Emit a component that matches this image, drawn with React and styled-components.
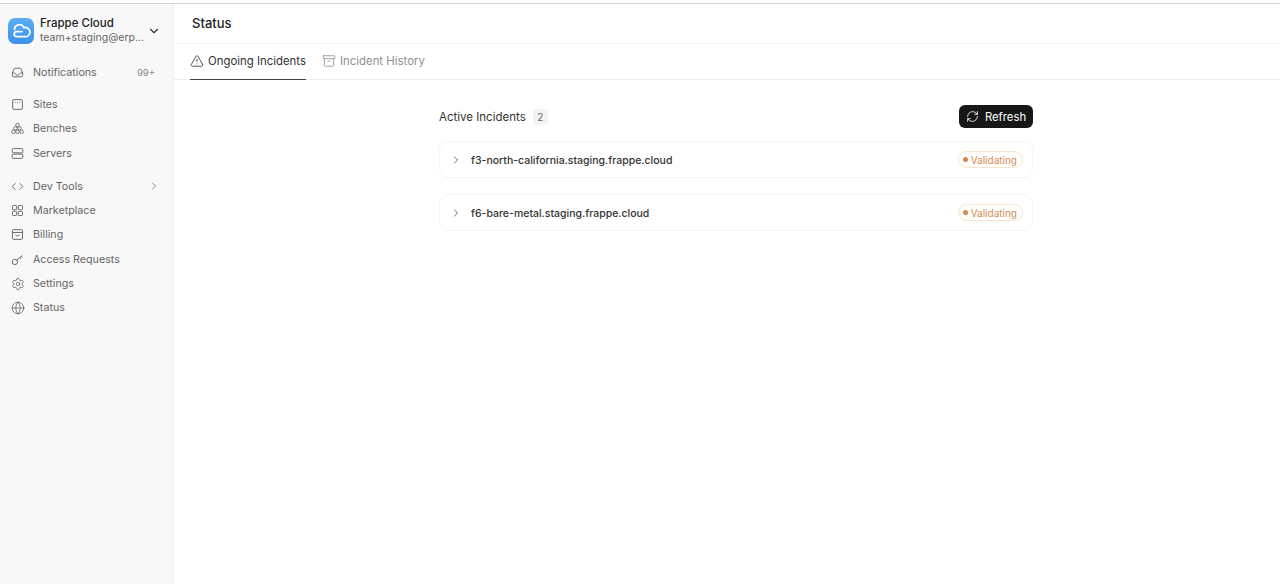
import React from "react";
import styled, { createGlobalStyle } from "styled-components";
import { AlertTriangle, Archive, ChevronDown, ChevronRight, Globe, RefreshCw, Settings } from "lucide-react";

const GlobalStyle = createGlobalStyle`
  html, body {
    margin: 0;
    padding: 0;
    background: #fff;
    font-family: Inter, "Liberation Sans", sans-serif;
  }
`;

const InboxIcon = (props) => (
  <svg viewBox="0 0 16 16" fill="none" stroke="currentColor" strokeWidth="1.1" {...props}>
    <path d="M1.700 8.500 3.800 3.500c.2-.5.6-.8 1.200-.8h6c.6 0 1 .3 1.200.8l2.100 5v3.300c0 .9-.6 1.500-1.500 1.500H3.200c-.9 0-1.500-.6-1.500-1.500z" />
    <path d="M1.700 8.300c2 0 3.300.4 3.800 1.500.5 1 1.300 1.400 2.500 1.400s2-.4 2.500-1.400c.5-1.100 1.800-1.500 3.800-1.500" />
  </svg>
);

const SiteIcon = (props) => (
  <svg viewBox="0 0 16 16" fill="none" stroke="currentColor" strokeWidth="1.100" {...props}>
    <rect x="2" y="2" width="12" height="12" rx="1.500" />
    <path d="M4.500 5.300h1M7.500 5.300h1M10.500 5.300h1" />
  </svg>
);

const BenchIcon = (props) => (
  <svg viewBox="0 0 16 16" fill="none" stroke="currentColor" strokeWidth="1" {...props}>
    <circle cx="8" cy="3.800" r="2.200" />
    <circle cx="5.500" cy="7.800" r="2.200" />
    <circle cx="10.500" cy="7.800" r="2.200" />
    <circle cx="3" cy="12" r="2.200" />
    <circle cx="8" cy="12" r="2.200" />
    <circle cx="13" cy="12" r="2.200" />
  </svg>
);

const ServerIcon = (props) => (
  <svg viewBox="0 0 16 16" fill="none" stroke="currentColor" strokeWidth="1.100" {...props}>
    <rect x="1.500" y="2" width="13" height="5.200" rx="1.200" />
    <rect x="1.500" y="8.800" width="13" height="5.200" rx="1.200" />
  </svg>
);

const CodeIcon = (props) => (
  <svg viewBox="0 0 16 16" fill="none" stroke="currentColor" strokeWidth="1.100" {...props}>
    <path d="M5.500 4 1.500 8l4 4M10.500 4l4 4-4 4" />
  </svg>
);

const GridIcon = (props) => (
  <svg viewBox="0 0 16 16" fill="none" stroke="currentColor" strokeWidth="1.100" {...props}>
    <rect x="1.800" y="1.800" width="5.200" height="5.200" rx="1" />
    <rect x="9" y="1.800" width="5.200" height="5.200" rx="1" />
    <rect x="1.800" y="9" width="5.200" height="5.200" rx="1" />
    <rect x="9" y="9" width="5.200" height="5.200" rx="1" />
  </svg>
);

const BillingIcon = (props) => (
  <svg viewBox="0 0 16 16" fill="none" stroke="currentColor" strokeWidth="1.100" {...props}>
    <rect x="1.800" y="2" width="12.400" height="12" rx="1.500" />
    <path d="M1.800 5.500h12.400M5.500 8c.4 1.100 1.300 1.700 2.500 1.700s2.100-.6 2.500-1.700" />
  </svg>
);

const KeyIcon = (props) => (
  <svg viewBox="0 0 16 16" fill="none" stroke="currentColor" strokeWidth="1.100" {...props}>
    <circle cx="4.800" cy="11" r="3.300" />
    <path d="M7.200 8.700 13.800 3M10.800 5.600l1.400 1.700M12.700 4l1.300 1.500" />
  </svg>
);

const CloudLogo = () => (
  <svg width="20" height="14" viewBox="0 0 18 13" fill="none" stroke="#fff" strokeWidth="1.600" strokeLinecap="round">
    <path d="M3 5A4.500 4.500 0 0 1 11.600 3.300 4 4 0 0 1 14 11.800H5A2.400 2.400 0 0 1 5 7H10" />
  </svg>
);

const primaryNav = [
  { label: "Sites", Icon: SiteIcon },
  { label: "Benches", Icon: BenchIcon },
  { label: "Servers", Icon: ServerIcon },
];
const secondaryNav = [
  { label: "Dev Tools", Icon: CodeIcon, more: true },
  { label: "Marketplace", Icon: GridIcon },
  { label: "Billing", Icon: BillingIcon },
  { label: "Access Requests", Icon: KeyIcon },
  { label: "Settings", Icon: Settings, big: true },
  { label: "Status", Icon: Globe, big: true },
];

const incidents = ["f3-north-california.staging.frappe.cloud", "f6-bare-metal.staging.frappe.cloud"];

const App = () => {
  return (
    <Page>
      <GlobalStyle />
      <TopRule />
      <Columns>
        <Sidebar>
          <Account>
            <Logo>
              <CloudLogo />
            </Logo>
            <AccountText>
              <AccountName>Frappe Cloud</AccountName>
              <AccountMail>team+staging@erp...</AccountMail>
            </AccountText>
            <ChevronDown size={14} color="#333" strokeWidth={2} />
          </Account>
          <NavGroup>
            <NavRow>
              <InboxIcon width={13} height={13} />
              <NavLabel>Notifications</NavLabel>
              <Count>99+</Count>
            </NavRow>
          </NavGroup>
          <NavGroup>
            {primaryNav.map(({ label, Icon }) => (
              <NavRow key={label}>
                <Icon width={13} height={13} />
                <NavLabel>{label}</NavLabel>
              </NavRow>
            ))}
          </NavGroup>
          <NavGroup>
            {secondaryNav.map(({ label, Icon, more, big }) => (
              <NavRow key={label}>
                {big ? <Icon size={14} strokeWidth={1.300} /> : <Icon width={13} height={13} />}
                <NavLabel $wide={big}>{label}</NavLabel>
                {more && <MoreArrow size={12} color="#8a8a8a" />}
              </NavRow>
            ))}
          </NavGroup>
        </Sidebar>
        <Main>
          <Header>Status</Header>
          <Tabs>
            <Tab $active>
              <AlertTriangle size={14} strokeWidth={1.400} />
              Ongoing Incidents
            </Tab>
            <Tab>
              <Archive size={14} strokeWidth={1.400} />
              Incident History
            </Tab>
          </Tabs>
          <Content>
            <IncidentPanel>
              <PanelHead>
                <PanelTitle>
                  Active Incidents <Badge>2</Badge>
                </PanelTitle>
                <RefreshButton>
                  <RefreshCw size={13} strokeWidth={1.500} />
                  Refresh
                </RefreshButton>
              </PanelHead>
              {incidents.map((name) => (
                <IncidentCard key={name}>
                  <ChevronRight size={12} color="#444" strokeWidth={1.600} />
                  <IncidentName>{name}</IncidentName>
                  <StatusPill>
                    <Dot />
                    Validating
                  </StatusPill>
                </IncidentCard>
              ))}
            </IncidentPanel>
          </Content>
        </Main>
      </Columns>
    </Page>
  );
};

const Page = styled.div`
  width: 1280px;
  height: 584px;
  overflow: hidden;
  display: flex;
  flex-direction: column;
  background: #fff;
`;

const TopRule = styled.div`
  height: 1px;
  margin-top: 3px;
  background: #d4d4d4;
  flex: none;
`;

const Columns = styled.div`
  flex: 1;
  display: flex;
  min-height: 0;
`;

const Sidebar = styled.aside`
  width: 174px;
  flex: none;
  box-sizing: border-box;
  padding: 12px 8px 0;
  background: #f8f8f8;
  border-right: 1px solid #efefef;
`;

const Account = styled.div`
  display: flex;
  align-items: center;
  gap: 6px;
  height: 29px;
  padding-right: 4px;
  margin-bottom: 15px;
`;

const Logo = styled.div`
  width: 26px;
  height: 26px;
  flex: none;
  border-radius: 7px;
  background: linear-gradient(180deg, #5aaef5, #3a90ec);
  display: flex;
  align-items: center;
  justify-content: center;
`;

const AccountText = styled.div`
  flex: 1;
  min-width: 0;
`;

const AccountName = styled.div`
  font-size: 11.500px;
  line-height: 15px;
  font-weight: 500;
  color: #222;
`;

const AccountMail = styled.div`
  font-size: 10.500px;
  line-height: 14px;
  color: #666;
  white-space: nowrap;
`;

const NavGroup = styled.div`
  margin-bottom: 8px;
  &:nth-of-type(3) {
    margin-bottom: 9px;
  }
`;

const NavRow = styled.div`
  display: flex;
  align-items: center;
  height: 24.300px;
  padding: 0 10px 0 2.500px;
  color: #5c5c5c;

  svg {
    flex: none;
  }
`;

const NavLabel = styled.span`
  flex: 1;
  margin-left: ${(p) => (p.$wide ? "8.500px" : "9.500px")};
  font-size: 10.700px;
  color: #666;
`;

const Count = styled.span`
  font-size: 9.500px;
  color: #8a8a8a;
`;

const MoreArrow = styled(ChevronRight)`
  margin-right: -5px;
`;

const Main = styled.main`
  flex: 1;
  min-width: 0;
`;

const Header = styled.div`
  height: 40px;
  box-sizing: border-box;
  padding: 0 0 2px 18px;
  display: flex;
  align-items: center;
  font-size: 13px;
  font-weight: 500;
  color: #222;
  border-bottom: 1px solid #f3f3f3;
`;

const Tabs = styled.div`
  height: 36px;
  box-sizing: border-box;
  padding-left: 16px;
  display: flex;
  gap: 16px;
  border-bottom: 1px solid #ededed;
`;

const Tab = styled.div`
  height: 36px;
  box-sizing: border-box;
  padding-bottom: 2px;
  display: flex;
  align-items: center;
  gap: 4px;
  font-size: 11.400px;
  color: ${(p) => (p.$active ? "#333" : "#8f8f8f")};
  border-bottom: ${(p) => (p.$active ? "1px solid #444" : "none")};
`;

const Content = styled.div`
  padding: 25px 0 0 265px;
`;

const IncidentPanel = styled.section`
  width: 594px;
`;

const PanelHead = styled.div`
  display: flex;
  align-items: center;
  justify-content: space-between;
  height: 23px;
  margin-bottom: 13px;
`;

const PanelTitle = styled.div`
  display: flex;
  align-items: center;
  gap: 7px;
  font-size: 11.500px;
  color: #333;
`;

const Badge = styled.span`
  width: 15px;
  height: 16px;
  border-radius: 3px;
  background: #f3f3f3;
  color: #666;
  font-size: 10px;
  display: flex;
  align-items: center;
  justify-content: center;
`;

const RefreshButton = styled.button`
  height: 23px;
  width: 74px;
  border: none;
  border-radius: 6px;
  background: #171717;
  color: #fff;
  font: inherit;
  font-size: 11.300px;
  display: flex;
  align-items: center;
  justify-content: center;
  gap: 6px;
  padding: 0;
`;

const IncidentCard = styled.div`
  height: 37px;
  box-sizing: border-box;
  margin-bottom: 16px;
  padding: 0 9px 0 10px;
  display: flex;
  align-items: center;
  border: 1px solid #f5f5f5;
  border-radius: 10px;
`;

const IncidentName = styled.span`
  flex: 1;
  margin-left: 9px;
  padding-top: 1px;
  font-size: 10.500px;
  font-weight: 500;
  color: #333;
`;

const StatusPill = styled.span`
  height: 17px;
  box-sizing: border-box;
  padding: 0 5px 0 4px;
  display: flex;
  align-items: center;
  gap: 3px;
  border: 1px solid #f6e6cf;
  border-radius: 9px;
  background: #fffdf9;
  font-size: 10px;
  color: #cf8f5e;
`;

const Dot = styled.span`
  width: 5px;
  height: 5px;
  border-radius: 50%;
  background: #d08b55;
`;

export default App;
